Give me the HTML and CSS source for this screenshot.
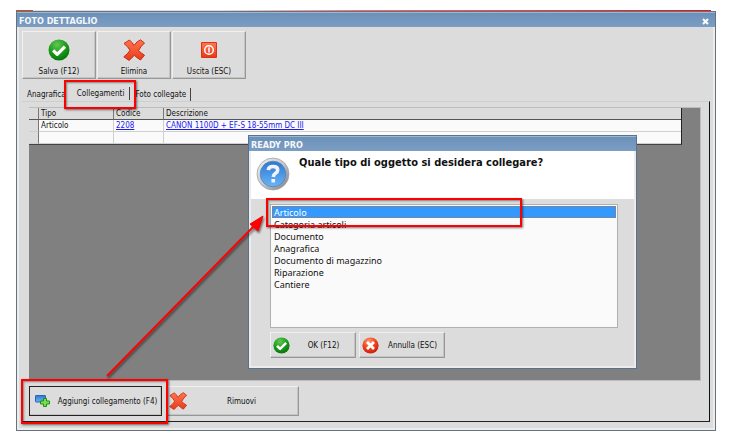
FILE: index.html
```html
<!DOCTYPE html>
<html lang="it">
<head>
<meta charset="utf-8">
<title>Foto dettaglio</title>
<link rel="stylesheet" href="styles.css">
</head>
<body>
<svg class="defs" aria-hidden="true">
  <defs>
    <radialGradient id="green" cx=".4" cy=".25" r=".75"><stop offset="0" stop-color="#62c853"/><stop offset=".55" stop-color="#1c9c1c"/><stop offset="1" stop-color="#08780b"/></radialGradient>
    <radialGradient id="red" cx=".4" cy=".25" r=".8"><stop offset="0" stop-color="#ff9a70"/><stop offset=".5" stop-color="#f04421"/><stop offset="1" stop-color="#c31c08"/></radialGradient>
    <linearGradient id="orange" x2="0" y2="1"><stop offset="0" stop-color="#ff7650"/><stop offset="1" stop-color="#e63b17"/></linearGradient>
    <linearGradient id="blue" x2="0" y2="1"><stop offset="0" stop-color="#2c78d2"/><stop offset="1" stop-color="#69b5f6"/></linearGradient>
    <linearGradient id="steel" x2="1" y2="1"><stop offset="0" stop-color="#f4f4f4"/><stop offset=".5" stop-color="#c4c6c9"/><stop offset="1" stop-color="#777c82"/></linearGradient>
    <symbol id="ok" viewBox="0 0 22 22"><circle cx="11" cy="11" r="10.5" fill="url(#green)"/><path d="M5.2 11.4 9.2 15.3 17 7.6" fill="none" stroke="#fff" stroke-width="3.2" stroke-linejoin="round"/></symbol>
    <symbol id="cross" viewBox="0 0 22 22"><path d="M1 4.500 6.500 1Q9 3 11 6.500 13.500 2.500 17.500 .8L21.500 4Q18 7 15.500 11.500 18 14 21.500 16.200L17.500 21Q14 19 11.300 16.300 9 19 6 21.400L.8 17.800Q4.800 15 7 11.300 5 7.500 1 4.500Z" fill="url(#orange)" stroke="#c92b11" stroke-width="1" stroke-linejoin="round"/></symbol>
    <symbol id="power" viewBox="0 0 16 16"><rect width="16" height="16" rx="1" fill="#dd3214"/><rect x="1" y="1" width="14" height="14" fill="url(#orange)"/><circle cx="8" cy="8" r="4.300" fill="none" stroke="#fff" stroke-width="1.500"/><path d="M8 5.500v5" stroke="#fff" stroke-width="1.500"/></symbol>
    <symbol id="cancel" viewBox="0 0 22 22"><circle cx="11" cy="11" r="10.500" fill="url(#red)"/><path d="m6.500 6.500 9 9m0-9-9 9" stroke="#fff" stroke-width="3.600"/></symbol>
    <symbol id="add" viewBox="0 0 15 12"><rect x=".5" y=".5" width="10" height="6.500" rx=".5" fill="url(#blue)" stroke="#2864b4"/><path d="M8.500 3.500h3v2.500H14.500v3h-3v2.500h-3V9h-3V6h3z" fill="#74e04c" stroke="#238b19"/></symbol>
    <symbol id="question" viewBox="0 0 34 34"><circle cx="17" cy="17" r="16" fill="url(#steel)" stroke="#a0a3a6" stroke-width=".8"/><circle cx="17" cy="17" r="12.800" fill="url(#blue)" stroke="#5a83b8" stroke-width=".8"/><path d="M12.300 13.200Q12.600 9.500 17 9.500 21.700 9.500 21.700 13 21.700 15 19.300 16.500 17.500 17.600 17.300 20" fill="none" stroke="#f2f3ff" stroke-width="3.600"/><rect x="15.400" y="22" width="3.700" height="3.500" fill="#f2f3ff"/></symbol>
    <symbol id="close" viewBox="0 0 7 7"><path d="m1 1 5 5m0-5-5 5" stroke="#fff" stroke-width="2"/></symbol>
  </defs>
</svg>
<main class="window">
  <header class="titlebar">
    <h1>FOTO DETTAGLIO</h1>
    <button class="close" aria-label="Chiudi"><svg><use href="#close"/></svg></button>
  </header>
  <div class="content">
    <div class="toolbar">
      <button class="button tool"><svg><use href="#ok"/></svg>Salva (F12)</button>
      <button class="button tool"><svg><use href="#cross"/></svg>Elimina</button>
      <button class="button tool"><svg class="power"><use href="#power"/></svg>Uscita (ESC)</button>
    </div>
    <div class="tabs" role="tablist">
      <button class="tab" role="tab">Anagrafica</button>
      <button class="tab active" role="tab" aria-selected="true">Collegamenti</button>
      <button class="tab" role="tab">Foto collegate</button>
    </div>
    <section class="panel" role="tabpanel">
      <div class="grid">
        <table>
          <colgroup><col class="c-mark"><col class="c-type"><col class="c-code"><col></colgroup>
          <thead><tr><th></th><th>Tipo</th><th>Codice</th><th>Descrizione</th></tr></thead>
          <tbody>
            <tr><td></td><td>Articolo</td><td><a href="#a">2208</a></td><td><a href="#a">CANON 1100D + EF-S 18-55mm DC III</a></td></tr>
            <tr><td></td><td></td><td></td><td></td></tr>
          </tbody>
        </table>
      </div>
      <div class="actions">
        <button class="button action focused"><svg class="add"><use href="#add"/></svg><span>Aggiungi collegamento (F4)</span></button>
        <button class="button action"><svg><use href="#cross"/></svg><span>Rimuovi</span></button>
      </div>
    </section>
  </div>
</main>
<section class="dialog" role="dialog" aria-labelledby="dialog-title">
  <header class="titlebar"><h2 id="dialog-title">READY PRO</h2></header>
  <div class="prompt">
    <svg><use href="#question"/></svg>
    <label for="kind">Quale tipo di oggetto si desidera collegare?</label>
  </div>
  <div class="choices">
    <select id="kind" size="7">
      <option selected>Articolo</option>
      <option>Categoria articoli</option>
      <option>Documento</option>
      <option>Anagrafica</option>
      <option>Documento di magazzino</option>
      <option>Riparazione</option>
      <option>Cantiere</option>
    </select>
    <div class="answers">
      <button class="button answer"><svg><use href="#ok"/></svg><span>OK (F12)</span></button>
      <button class="button answer"><svg><use href="#cancel"/></svg><span>Annulla (ESC)</span></button>
    </div>
  </div>
</section>
<div class="mark mark-tab"></div>
<div class="mark mark-add"></div>
<div class="mark mark-choice"></div>
<svg class="arrow" viewBox="0 0 160 166" aria-hidden="true"><path d="M2 163 149 13" stroke="#f00" stroke-width="2"/><path d="m158 3-5 15-8-7z" fill="#f00" stroke="#f00"/></svg>
</body>
</html>
```
FILE: styles.css
```css
* { box-sizing: border-box; }
body {
  position: relative;
  display: flex;
  min-height: 100vh;
  margin: 0;
  padding: 11px 26px 14px 16px;
  background: #fff;
  color: #111;
  font: 8px/12px "DejaVu Sans Condensed", "DejaVu Sans", sans-serif;
}
body::before {
  content: "";
  position: absolute;
  top: 10px;
  left: 16px;
  right: 31px;
  height: 1px;
  background: linear-gradient(90deg, #d84a18 0 17px, #ddd 17px 30%, #f66 50%, #e11);
}
h1, h2 { margin: 0; font-size: 9px; line-height: 12px; }
button { font: inherit; color: inherit; white-space: nowrap; }
.defs { position: absolute; width: 0; height: 0; }
.window {
  flex: 1;
  display: flex;
  flex-direction: column;
  border: 1px solid #66737f;
  background: #dcdcdc;
}
.titlebar {
  display: flex;
  align-items: center;
  justify-content: space-between;
  height: 15px;
  padding: 2px 6px 0 2px;
  border-top: 1px solid #9bb7d2;
  background: linear-gradient(#6b91b9, #7c9dc4);
  color: #f4f7fa;
}
.close {
  display: flex;
  padding: 0;
  border: 0;
  background: none;
}
.close svg { width: 7px; height: 7px; }
.content {
  flex: 1;
  display: flex;
  flex-direction: column;
  padding: 4px 3px 6px;
  border: solid #ececec;
  border-width: 0 2px 2px;
}
.toolbar { display: flex; gap: 1px; }
.button {
  display: flex;
  align-items: center;
  border: 1px solid;
  border-color: #f0f0f0 #979797 #979797 #f0f0f0;
  box-shadow: inset -1px -1px #c4c4c4;
  background: #dcdcdc;
}
.tool {
  flex-direction: column;
  gap: 1px;
  width: 74px;
  height: 48px;
  padding: 7px 2px 0;
}
.tool svg { width: 22px; height: 22px; }
.tool .power { width: 16px; height: 16px; margin: 3px; }
.tool { justify-content: space-between; }
.tabs { display: flex; padding-top: 8px; }
.tab {
  height: 13px;
  margin-top: 1px;
  padding: 1px 4px 0 5px;
  border: 0;
  background: none;
}
.tab.active { margin-top: 0; padding: 0 5px; }
.tab:first-child { padding-right: 6px; }
.tab:not(:first-child) { border-right: 1px solid #444; }
.panel {
  flex: 1;
  display: flex;
  flex-direction: column;
  gap: 5px;
  padding: 5px 8px 5px 7px;
  border-top: 1px solid #cfcfcf;
  border-right: 1px solid #111;
  border-bottom: 1px solid #222;
}
.grid {
  flex: 1;
  border: 1px solid #bcbcbc;
  border-left: 0;
  padding-right: 18px;
  background: #808080;
}
table {
  width: 100%;
  table-layout: fixed;
  border-spacing: 0;
  border-right: 1px solid #222;
  border-bottom: 1px solid #444;
}
.c-mark { width: 10px; }
.c-type { width: 75px; }
.c-code { width: 50px; }
th, td {
  height: 12px;
  padding: 1px 0 0 2px;
  border-right: 1px solid #cfcfcf;
  border-bottom: 1px solid #cfcfcf;
  background: #fafafa;
  font-weight: normal;
  line-height: 10px;
  text-align: left;
}
th { background: #dcdcdc; border-right-color: #777; border-bottom-color: #555; }
td:first-child { background: #dcdcdc; border-right-color: #777; }
th:last-child, td:last-child { border-right: 0; }
a { color: #1a1aef; }
.actions { display: flex; gap: 4px; }
.action { width: 133px; height: 30px; padding: 0 2px; }
.action svg { flex: none; width: 18px; height: 18px; }
.action span { flex: 1; padding-top: 2px; }
.action .add { width: 15px; height: 12px; margin: 0 6px 0 3px; }
.action.focused { border-color: #222; outline: 1px solid #222; outline-offset: -1px; }
.dialog {
  position: absolute;
  top: 135px;
  left: 248px;
  width: 389px;
  border: 1px solid #58738d;
  background: #dcdcdc;
  box-shadow: inset 0 0 0 2px #ececec;
}
.prompt {
  display: flex;
  gap: 9px;
  height: 48px;
  margin: 0 2px;
  padding: 6px 5px;
  background: #fff;
}
.prompt svg { width: 34px; height: 34px; }
.prompt label { font-size: 11px; line-height: 12px; font-weight: bold; }
.choices { padding: 5px 18px 10px 21px; }
select {
  display: block;
  width: 100%;
  height: 124px;
  padding: 1px;
  border: 1px solid #b0b0b0;
  border-radius: 0;
  outline: 0;
  background: #fafafa;
  color: #111;
  font: 9px/12px "Noto Sans", sans-serif;
}
option { height: 12px; min-height: 0; padding: 0 2px; line-height: 12px; }
option:checked {
  background: #39f linear-gradient(#39f, #39f);
  color: #fff;
  outline: 1px dotted #b07840;
  outline-offset: -1px;
}
.answers { display: flex; gap: 3px; margin-top: 4px; }
.answer { width: 86px; height: 26px; padding: 0 2px; }
.answer svg { flex: none; width: 17px; height: 17px; }
.answer span { flex: 1; padding: 2px 0 0 4px; }
.mark {
  position: absolute;
  border: 2px solid #f00;
  box-shadow: 1px 1px 2px #0008, inset 1px 1px 2px #0006;
}
.mark-tab { top: 80px; left: 64px; width: 72px; height: 29px; }
.mark-add { top: 379px; left: 21px; width: 147px; height: 45px; }
.mark-choice { top: 198px; left: 266px; width: 256px; height: 29px; }
.arrow {
  position: absolute;
  top: 213px;
  left: 105px;
  width: 160px;
  height: 166px;
  filter: drop-shadow(1px 2px 1px #0008);
}
```
